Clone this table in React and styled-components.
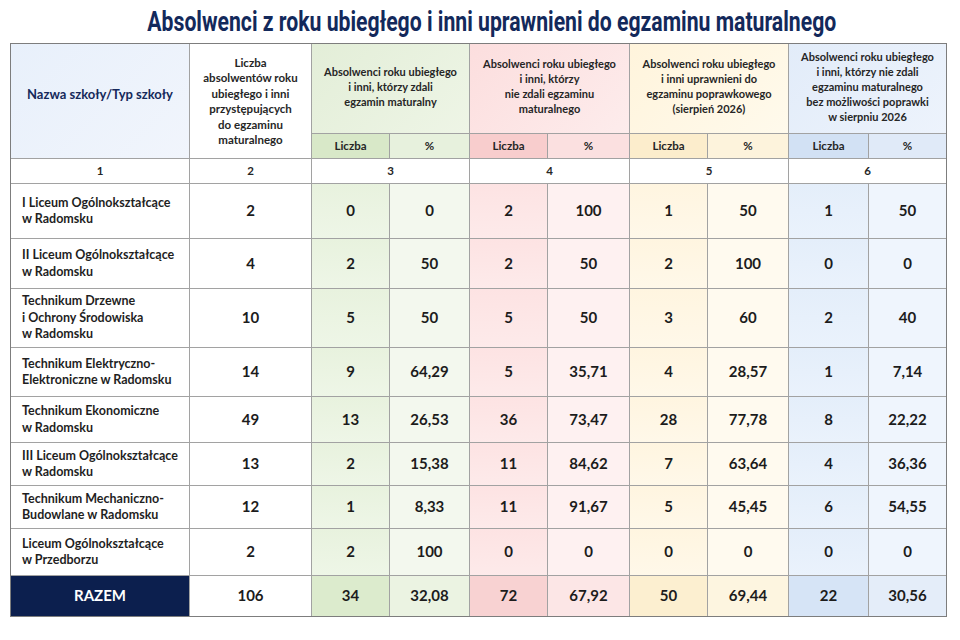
import styled, { createGlobalStyle } from "styled-components";

const GlobalStyle = createGlobalStyle`
  body {
    margin: 0;
    background: #ffffff;
    font-family: "Lato", "Noto Sans", sans-serif;
    color: #1c1c1c;
  }
`;

const groups = {
  green: { head: "linear-gradient(135deg, #e3eed8, #eef5e6)", sub: ["#d8e8c8", "#e7f1dd"], cell: ["linear-gradient(180deg, #e8f2de, #eef6e7)", "#f3f8ee"], total: ["#dcebcd", "#ebf3e2"] },
  red: { head: "linear-gradient(135deg, #fcdede, #fdecec)", sub: ["#f8cdcd", "#fbe0e0"], cell: ["linear-gradient(180deg, #fde3e3, #fdeaea)", "#fef1f1"], total: ["#f8d2d2", "#fce6e6"] },
  yellow: { head: "linear-gradient(135deg, #fff4dc, #fffaec)", sub: ["#fcedcc", "#fdf3dc"], cell: ["linear-gradient(180deg, #fff5e0, #fff8e9)", "#fffaef"], total: ["#fcefd0", "#fdf5e0"] },
  blue: { head: "linear-gradient(135deg, #e2ecf9, #edf3fc)", sub: ["#d2e1f4", "#e0eaf8"], cell: ["linear-gradient(180deg, #e4eefa, #eaf2fc)", "#eff5fd"], total: ["#d6e4f6", "#e4edf9"] },
};

const groupOrder = ["green", "red", "yellow", "blue"];

const groupTitles = [
  ["Absolwenci roku ubiegłego", "i inni, którzy zdali", "egzamin maturalny"],
  ["Absolwenci roku ubiegłego", "i inni, którzy", "nie zdali egzaminu", "maturalnego"],
  ["Absolwenci roku ubiegłego", "i inni uprawnieni do", "egzaminu poprawkowego", "(sierpień 2026)"],
  ["Absolwenci roku ubiegłego", "i inni, którzy nie zdali", "egzaminu maturalnego", "bez możliwości poprawki", "w sierpniu 2026"],
];

const rows = [
  { name: ["I Liceum Ogólnokształcące", "w Radomsku"], total: "2", vals: ["0", "0", "2", "100", "1", "50", "1", "50"] },
  { name: ["II Liceum Ogólnokształcące", "w Radomsku"], total: "4", vals: ["2", "50", "2", "50", "2", "100", "0", "0"] },
  { name: ["Technikum Drzewne", "i Ochrony Środowiska", "w Radomsku"], total: "10", vals: ["5", "50", "5", "50", "3", "60", "2", "40"] },
  { name: ["Technikum Elektryczno-", "Elektroniczne w Radomsku"], total: "14", vals: ["9", "64,29", "5", "35,71", "4", "28,57", "1", "7,14"] },
  { name: ["Technikum Ekonomiczne", "w Radomsku"], total: "49", vals: ["13", "26,53", "36", "73,47", "28", "77,78", "8", "22,22"] },
  { name: ["III Liceum Ogólnokształcące", "w Radomsku"], total: "13", vals: ["2", "15,38", "11", "84,62", "7", "63,64", "4", "36,36"] },
  { name: ["Technikum Mechaniczno-", "Budowlane w Radomsku"], total: "12", vals: ["1", "8,33", "11", "91,67", "5", "45,45", "6", "54,55"] },
  { name: ["Liceum Ogólnokształcące", "w Przedborzu"], total: "2", vals: ["2", "100", "0", "0", "0", "0", "0", "0"] },
];

const totals = { total: "106", vals: ["34", "32,08", "72", "67,92", "50", "69,44", "22", "30,56"] };

const Page = styled.div`
  width: 960px;
  height: 640px;
  overflow: hidden;
`;

const Title = styled.h1`
  margin: 0;
  height: 43px;
  display: flex;
  align-items: center;
  justify-content: center;
  padding-left: 23px;
  font-family: "Roboto", "Liberation Sans", sans-serif;
  font-weight: 700;
  font-size: 27px;
  color: #13295b;
  white-space: nowrap;
`;

const TitleText = styled.span`
  display: inline-block;
  transform: scaleX(0.785);
  transform-origin: center;
`;

const Table = styled.div`
  margin-left: 10px;
  width: 935px;
  display: grid;
  grid-template-columns: 178px 121px 77px 79px 77px 81px 77px 80px 79px 77px;
  grid-template-rows: 89px 24px 24px 54px 49px 58px 48px 45px 42px 42px 46px 40px;
  gap: 1px;
  background: #a2a2a2;
  border: 1px solid #7d7d7d;
`;

const Cell = styled.div`
  display: flex;
  align-items: center;
  justify-content: center;
  text-align: center;
  background: ${(p) => p.$bg || "#ffffff"};
  grid-row: ${(p) => p.$row || "auto"};
  grid-column: ${(p) => p.$col || "auto"};
  line-height: 1.3;
`;

const NameHead = styled(Cell)`
  background: linear-gradient(135deg, #e8f0fb, #f1f5fc);
  color: #15295a;
  font-weight: 700;
  font-size: 13px;
  padding-bottom: 14px;
`;

const GroupHead = styled(Cell)`
  flex-direction: column;
  font-size: 11px;
  font-weight: 700;
  color: #262626;
  line-height: 15px;
  padding-bottom: 5px;
`;

const CountHead = styled(Cell)`
  flex-direction: column;
  font-size: 11.5px;
  font-weight: 700;
  color: #262626;
  line-height: 15.5px;
`;

const SubHead = styled(Cell)`
  font-size: 11.5px;
  font-weight: 700;
  color: #262626;
`;

const IndexCell = styled(Cell)`
  font-size: 11.5px;
  font-weight: 700;
  color: #262626;
`;

const NameCell = styled(Cell)`
  flex-direction: column;
  align-items: flex-start;
  justify-content: center;
  text-align: left;
  padding-left: 11px;
  font-size: 12.5px;
  font-weight: 700;
  line-height: 16.5px;
  color: #1f1f1f;
`;

const ValueCell = styled(Cell)`
  font-size: 15px;
  font-weight: 700;
  color: #1c1c1c;
`;

const TotalLabel = styled(Cell)`
  background: #0c1f4e;
  color: #ffffff;
  font-size: 15px;
  font-weight: 700;
`;

function Lines({ lines }) {
  return lines.map((l) => <span key={l}>{l}</span>);
}

export default function App() {
  return (
    <Page>
      <GlobalStyle />
      <Title>
        <TitleText>Absolwenci z roku ubiegłego i inni uprawnieni do egzaminu maturalnego</TitleText>
      </Title>
      <Table>
        <NameHead $row="1 / 3" $col="1">Nazwa szkoły/Typ szkoły</NameHead>
        <CountHead $row="1 / 3" $col="2">
          <Lines lines={["Liczba", "absolwentów roku", "ubiegłego i inni", "przystępujących", "do egzaminu", "maturalnego"]} />
        </CountHead>
        {groupOrder.map((g, i) => (
          <GroupHead key={g} $row="1" $col={`${3 + i * 2} / span 2`} $bg={groups[g].head}>
            <Lines lines={groupTitles[i]} />
          </GroupHead>
        ))}
        {groupOrder.map((g, i) => [
          <SubHead key={g + "l"} $row="2" $col={`${3 + i * 2}`} $bg={groups[g].sub[0]}>Liczba</SubHead>,
          <SubHead key={g + "p"} $row="2" $col={`${4 + i * 2}`} $bg={groups[g].sub[1]}>%</SubHead>,
        ])}
        <IndexCell>1</IndexCell>
        <IndexCell>2</IndexCell>
        {groupOrder.map((g, i) => (
          <IndexCell key={g} $col="span 2">{i + 3}</IndexCell>
        ))}
        {rows.map((r) => [
          <NameCell key={r.name[0]}>
            <Lines lines={r.name} />
          </NameCell>,
          <ValueCell key={r.name[0] + "t"}>{r.total}</ValueCell>,
          ...r.vals.map((v, j) => (
            <ValueCell key={r.name[0] + j} $bg={groups[groupOrder[Math.floor(j / 2)]].cell[j % 2]}>
              {v}
            </ValueCell>
          )),
        ])}
        <TotalLabel>RAZEM</TotalLabel>
        <ValueCell>{totals.total}</ValueCell>
        {totals.vals.map((v, j) => (
          <ValueCell key={"tot" + j} $bg={groups[groupOrder[Math.floor(j / 2)]].total[j % 2]}>
            {v}
          </ValueCell>
        ))}
      </Table>
    </Page>
  );
}
